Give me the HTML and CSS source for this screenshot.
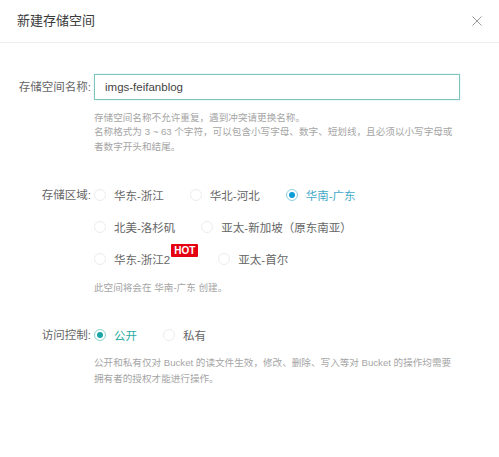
FILE: index.html
```html
<!DOCTYPE html>
<html lang="zh-CN">
<head>
<meta charset="utf-8">
<title>新建存储空间</title>
<link rel="stylesheet" href="styles.css">
</head>
<body>
<div class="dialog">
  <div class="dialog-header">
    <span class="dialog-title">新建存储空间</span>
    <span class="close" aria-label="关闭">
      <svg width="10" height="10" viewBox="0 0 10 10"><path d="M0.5 0.5 L9.5 9.5 M9.5 0.5 L0.5 9.5" stroke="#999" stroke-width="1" fill="none"/></svg>
    </span>
  </div>
  <div class="form">
    <div class="field field-name">
      <label class="label label-input">存储空间名称:</label>
      <div class="control">
        <div class="input">imgs-feifanblog</div>
        <p class="help help-name">存储空间名称不允许重复，遇到冲突请更换名称。<br>名称格式为 3 ~ 63 个字符，可以包含小写字母、数字、短划线，且必须以小写字母或者数字开头和结尾。</p>
      </div>
    </div>

    <div class="field field-region">
      <label class="label">存储区域:</label>
      <div class="control">
        <div class="radio-row">
          <span class="radio"><i class="dot"></i><span class="radio-text">华东-浙江</span></span>
          <span class="radio"><i class="dot"></i><span class="radio-text">华北-河北</span></span>
          <span class="radio checked region-checked"><i class="dot"></i><span class="radio-text">华南-广东</span></span>
        </div>
        <div class="radio-row">
          <span class="radio"><i class="dot"></i><span class="radio-text">北美-洛杉矶</span></span>
          <span class="radio"><i class="dot"></i><span class="radio-text">亚太-新加坡（原东南亚）</span></span>
        </div>
        <div class="radio-row">
          <span class="radio"><i class="dot"></i><span class="radio-text">华东-浙江2</span><span class="hot">HOT</span></span>
          <span class="radio"><i class="dot"></i><span class="radio-text">亚太-首尔</span></span>
        </div>
        <p class="help help-note">此空间将会在 华南-广东 创建。</p>
      </div>
    </div>

    <div class="field field-acl">
      <label class="label">访问控制:</label>
      <div class="control">
        <div class="radio-row">
          <span class="radio checked acl-checked"><i class="dot"></i><span class="radio-text">公开</span></span>
          <span class="radio"><i class="dot"></i><span class="radio-text">私有</span></span>
        </div>
        <p class="help help-acl">公开和私有仅对 Bucket 的读文件生效，修改、删除、写入等对 Bucket 的操作均需要拥有者的授权才能进行操作。</p>
      </div>
    </div>
  </div>
</div>
</body>
</html>
```

FILE: styles.css
```css
* { box-sizing: border-box; }

html, body {
  margin: 0;
  padding: 0;
  background: #ffffff;
}

body {
  font-family: "Liberation Sans", "Noto Sans CJK SC", sans-serif;
  font-size: 11.5px;
  color: #666;
  width: 499px;
  height: 457px;
  overflow: hidden;
}

.dialog-header {
  height: 43px;
  padding: 0 17px;
  display: flex;
  align-items: center;
  justify-content: space-between;
  border-bottom: 1px solid #ececec;
}

.dialog-title {
  font-size: 13px;
  color: #3a3a3a;
  line-height: 18px;
}

.close {
  display: flex;
  width: 10px;
  height: 10px;
}

.form {
  display: flex;
  flex-direction: column;
}

.field {
  display: grid;
  grid-template-columns: 91px 366px;
  column-gap: 3px;
  align-items: start;
}

.field-name { margin-top: 30.5px; }
.field-region { margin-top: 25px; }
.field-acl { margin-top: 24px; }

.label {
  text-align: right;
  color: #666;
  line-height: 32px;
  white-space: nowrap;
}

.label-input { line-height: 26px; }

.input {
  height: 26px;
  width: 366px;
  border: 1px solid #7cc5be;
  box-shadow: 0 0 1px rgba(124, 197, 190, 0.6);
  padding-left: 10px;
  line-height: 24px;
  color: #444;
  font-size: 11.5px;
}

.help {
  margin: 0;
  font-size: 9.6px;
  color: #a5a5a5;
}

.help-name { margin-top: 11px; line-height: 14.6px; }
.help-note { margin-top: 5px; line-height: 15px; }
.help-acl { margin-top: 3.5px; line-height: 16.6px; }

.radio-row {
  display: flex;
  height: 32px;
}

.radio {
  display: flex;
  align-items: center;
  height: 32px;
  margin-right: 26px;
}

.dot {
  width: 12px;
  height: 12px;
  border-radius: 50%;
  border: 1px solid #ececec;
  margin-right: 8px;
  flex: none;
  display: flex;
  align-items: center;
  justify-content: center;
}

.radio-text {
  white-space: nowrap;
  color: #666;
}

.checked .dot::after {
  content: "";
  width: 6px;
  height: 6px;
  border-radius: 50%;
}

.region-checked .dot { border-color: #8fcfe2; }
.region-checked .dot::after { background: #0b9dd6; }
.region-checked .radio-text { color: #45a9c8; }

.acl-checked .dot { border-color: #8ad2cd; }
.acl-checked .dot::after { background: #1aa5a8; }
.acl-checked .radio-text { color: #27aba3; }

.hot {
  align-self: flex-start;
  margin-top: 0.5px;
  margin-left: 1px;
  margin-right: -6px;
  background: #e50011;
  color: #fff;
  font-weight: bold;
  font-size: 10px;
  line-height: 13px;
  height: 13px;
  padding: 0 3px;
  border-radius: 1px;
}
```
